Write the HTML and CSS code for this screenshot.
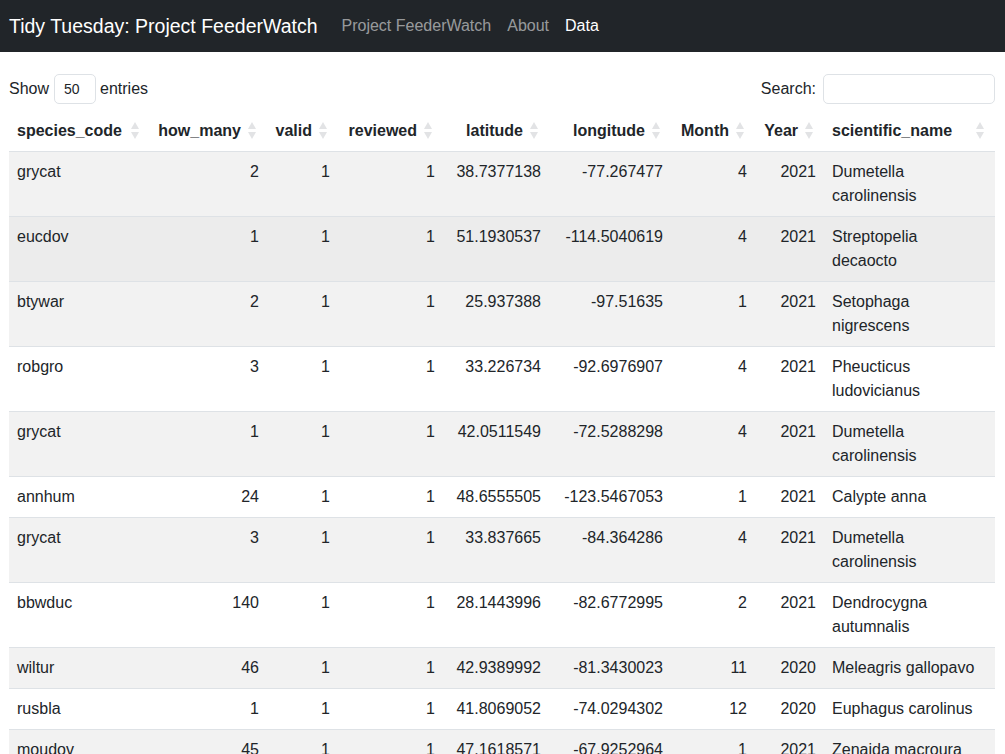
FILE: index.html
```html
<!DOCTYPE html>
<html lang="en">
<head>
<meta charset="utf-8">
<title>Tidy Tuesday: Project FeederWatch</title>
<link rel="stylesheet" href="styles.css">
</head>
<body>
<nav class="navbar">
  <span class="brand">Tidy Tuesday: Project FeederWatch</span>
  <a class="nav-link">Project FeederWatch</a>
  <a class="nav-link">About</a>
  <a class="nav-link active">Data</a>
</nav>
<main class="content">
  <div class="controls">
    <label class="length">Show <span class="select">50</span> entries</label>
    <label class="search">Search: <span class="search-input"></span></label>
  </div>
  <table class="data">
    <colgroup>
      <col class="c1"><col class="c2"><col class="c3"><col class="c4"><col class="c5"><col class="c6"><col class="c7"><col class="c8"><col class="c9">
    </colgroup>
    <thead>
      <tr>
        <th class="left">species_code<span class="sort"></span></th>
        <th>how_many<span class="sort"></span></th>
        <th>valid<span class="sort"></span></th>
        <th>reviewed<span class="sort"></span></th>
        <th>latitude<span class="sort"></span></th>
        <th>longitude<span class="sort"></span></th>
        <th>Month<span class="sort"></span></th>
        <th>Year<span class="sort"></span></th>
        <th class="left">scientific_name<span class="sort"></span></th>
      </tr>
    </thead>
    <tbody>
      <tr class="odd"><td class="left">grycat</td><td>2</td><td>1</td><td>1</td><td>38.7377138</td><td>-77.267477</td><td>4</td><td>2021</td><td class="name">Dumetella carolinensis</td></tr>
      <tr class="hover"><td class="left">eucdov</td><td>1</td><td>1</td><td>1</td><td>51.1930537</td><td>-114.5040619</td><td>4</td><td>2021</td><td class="name">Streptopelia decaocto</td></tr>
      <tr class="odd"><td class="left">btywar</td><td>2</td><td>1</td><td>1</td><td>25.937388</td><td>-97.51635</td><td>1</td><td>2021</td><td class="name">Setophaga nigrescens</td></tr>
      <tr><td class="left">robgro</td><td>3</td><td>1</td><td>1</td><td>33.226734</td><td>-92.6976907</td><td>4</td><td>2021</td><td class="name">Pheucticus ludovicianus</td></tr>
      <tr class="odd"><td class="left">grycat</td><td>1</td><td>1</td><td>1</td><td>42.0511549</td><td>-72.5288298</td><td>4</td><td>2021</td><td class="name">Dumetella carolinensis</td></tr>
      <tr><td class="left">annhum</td><td>24</td><td>1</td><td>1</td><td>48.6555505</td><td>-123.5467053</td><td>1</td><td>2021</td><td class="name">Calypte anna</td></tr>
      <tr class="odd"><td class="left">grycat</td><td>3</td><td>1</td><td>1</td><td>33.837665</td><td>-84.364286</td><td>4</td><td>2021</td><td class="name">Dumetella carolinensis</td></tr>
      <tr><td class="left">bbwduc</td><td>140</td><td>1</td><td>1</td><td>28.1443996</td><td>-82.6772995</td><td>2</td><td>2021</td><td class="name">Dendrocygna autumnalis</td></tr>
      <tr class="odd"><td class="left">wiltur</td><td>46</td><td>1</td><td>1</td><td>42.9389992</td><td>-81.3430023</td><td>11</td><td>2020</td><td class="name">Meleagris gallopavo</td></tr>
      <tr><td class="left">rusbla</td><td>1</td><td>1</td><td>1</td><td>41.8069052</td><td>-74.0294302</td><td>12</td><td>2020</td><td class="name">Euphagus carolinus</td></tr>
      <tr class="odd"><td class="left">moudov</td><td>45</td><td>1</td><td>1</td><td>47.1618571</td><td>-67.9252964</td><td>1</td><td>2021</td><td class="name">Zenaida macroura</td></tr>
    </tbody>
  </table>
</main>
</body>
</html>
```

FILE: styles.css
```css
* { box-sizing: border-box; }

html, body {
  margin: 0;
  padding: 0;
  background: #fff;
  color: #212529;
  font-family: "Liberation Sans", Arial, sans-serif;
  font-size: 16px;
  line-height: 24px;
}

.navbar {
  display: flex;
  align-items: center;
  height: 52px;
  padding: 0 9px;
  background: #212529;
}

.brand {
  color: #fff;
  font-size: 19.5px;
  line-height: 30px;
  margin-right: 16px;
}

.nav-link {
  color: rgba(255, 255, 255, 0.55);
  padding: 0 8px;
  text-decoration: none;
}

.nav-link.active { color: #fff; }

.content {
  padding: 22px 10px 0 9px;
}

.controls {
  display: flex;
  justify-content: space-between;
  align-items: center;
  height: 30px;
}

.length, .search {
  display: flex;
  align-items: center;
  gap: 5px;
}

.length { gap: 0; }

.select {
  display: inline-block;
  width: 42px;
  height: 30px;
  margin: 0 4px 0 5px;
  padding: 3px 0 0 9px;
  border: 1px solid #dee2e6;
  border-radius: 5px;
  font-size: 14px;
  line-height: 22px;
}

.search-input {
  display: inline-block;
  width: 172px;
  height: 30px;
  margin-left: 2px;
  border: 1px solid #dee2e6;
  border-radius: 5px;
}

.data {
  width: 986px;
  margin-top: 7px;
  border-collapse: collapse;
  table-layout: fixed;
}

.c1 { width: 141px; }
.c2 { width: 117px; }
.c3 { width: 71px; }
.c4 { width: 105px; }
.c5 { width: 106px; }
.c6 { width: 122px; }
.c7 { width: 84px; }
.c8 { width: 69px; }
.c9 { width: 171px; }

.data th {
  position: relative;
  padding: 8px 26px 8px 8px;
  text-align: right;
  font-weight: bold;
  white-space: nowrap;
  border-bottom: 1px solid #dee2e6;
}

.data th.left { text-align: left; }

.sort {
  position: absolute;
  right: 11px;
  top: 50%;
  width: 8px;
  height: 17px;
  margin-top: -9px;
}

.sort::before, .sort::after {
  content: "";
  position: absolute;
  left: 0;
  width: 0;
  height: 0;
  border-left: 4px solid transparent;
  border-right: 4px solid transparent;
}

.sort::before {
  top: 0;
  border-bottom: 7px solid #e2e3e5;
}

.sort::after {
  bottom: 0;
  border-top: 7px solid #e2e3e5;
}

.data td {
  padding: 8px;
  text-align: right;
  vertical-align: top;
  border-bottom: 1px solid #dee2e6;
}

.data td.left { text-align: left; }

.data td.name {
  text-align: left;
  padding-right: 12px;
}

.data tr.odd td { background: #f2f2f2; }
.data tr.hover td { background: #ececec; }
```
